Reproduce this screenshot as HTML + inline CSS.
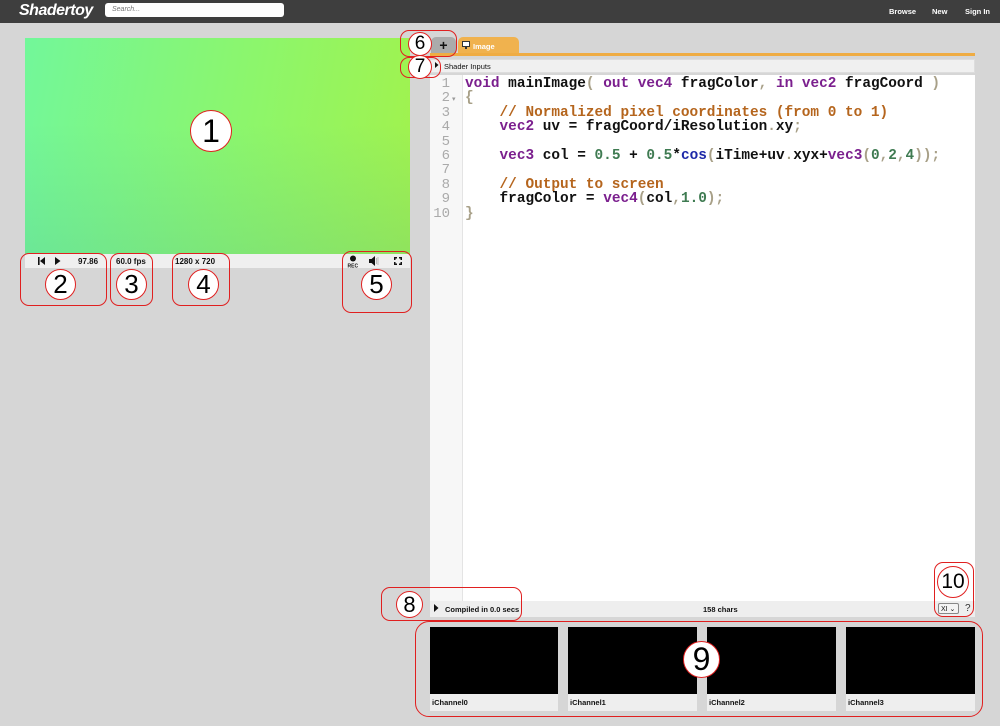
<!DOCTYPE html>
<html><head><meta charset="utf-8"><style>
*{margin:0;padding:0;box-sizing:border-box}
body{width:1000px;height:726px;overflow:hidden;background:#d6d6d6;font-family:"Liberation Sans",sans-serif;position:relative}
.abs{position:absolute}
#hdr{left:0;top:0;width:1000px;height:23px;background:#3e3e3e}
#logo{left:19px;top:2px;color:#fff;font:italic bold 16px "Liberation Sans",sans-serif;letter-spacing:-0.5px}
#search{left:105px;top:3px;width:179px;height:14px;background:#fff;border-radius:3px;font:italic 7px "Liberation Sans",sans-serif;color:#777;padding:3px 7px}
.nav{top:7px;color:#fff;font:bold 7.5px "Liberation Sans",sans-serif}
#canvas{left:25px;top:38px;width:385px;height:216px;background:linear-gradient(100deg,#72f79a 0%,#8cf66c 55%,#a2f24c 100%)}
#canvas:after{content:"";position:absolute;left:0;top:0;right:0;bottom:0;background:linear-gradient(180deg,rgba(0,0,0,0) 40%,rgba(60,160,170,0.18) 100%)}
#ctrl{left:25px;top:254px;width:385px;height:14px;background:#efefef;font:bold 8px "Liberation Sans",sans-serif;color:#111}
.ann{position:absolute;border:1.3px solid #e02020;border-radius:9px}
.circ{position:absolute;background:#fff;border:1.3px solid #e02020;border-radius:50%;display:flex;align-items:center;justify-content:center;font-family:"Liberation Sans",sans-serif;color:#000}
#code{left:430px;top:75px;width:545px;height:526px;background:#fff}
#gut{left:430px;top:75px;width:33px;height:526px;background:#f7f7f7;border-right:1px solid #e4e4e4}
pre{position:absolute;left:465px;top:77px;font:bold 14.4px/14.4px "Liberation Mono",monospace;color:#111}
.ln{position:absolute;left:430px;top:77px;width:20px;text-align:right;font:14px/14.4px "Liberation Mono",monospace;color:#aaa}
.k{color:#7b1f8e}.c{color:#b5651d}.n{color:#3f7b52}.p{color:#a8a088}.f{color:#1d28a8}
.ch{position:absolute;top:627px;height:84px;background:#eee}
.ch div{background:#000;height:67px}
.ch span{display:block;font:bold 7.5px "Liberation Sans",sans-serif;padding:4px 2px;color:#111}
</style></head><body>
<div id="hdr" class="abs"></div>
<div id="logo" class="abs">Shadertoy</div>
<div id="search" class="abs">Search...</div>
<div class="abs nav" style="left:889px">Browse</div>
<div class="abs nav" style="left:932px">New</div>
<div class="abs nav" style="left:965px">Sign In</div>

<div id="canvas" class="abs"></div>
<div id="ctrl" class="abs">
 <svg class="abs" style="left:13px;top:3px" width="8" height="8"><rect x="0" y="0" width="1.6" height="8" fill="#111"/><path d="M7 0V8L2 4Z" fill="#111"/></svg>
 <svg class="abs" style="left:30px;top:3px" width="6" height="8"><path d="M0 0V8L5.5 4Z" fill="#111"/></svg>
 <span class="abs" style="left:53px;top:3px">97.86</span>
 <span class="abs" style="left:91px;top:3px">60.0 fps</span>
 <span class="abs" style="left:150px;top:3px">1280 x 720</span>
 <svg class="abs" style="left:322px;top:1px" width="12" height="13"><circle cx="6" cy="3.5" r="3" fill="#111"/><text x="0.5" y="12.5" font-size="5" font-weight="bold" font-family="Liberation Sans" fill="#111">REC</text></svg>
 <svg class="abs" style="left:344px;top:2px" width="10" height="10"><path d="M0 3H2.5L6 0V10L2.5 7H0Z" fill="#111"/><path d="M7.5 2V8M9 1V9" stroke="#999" stroke-width="0.6"/></svg>
 <svg class="abs" style="left:369px;top:3px" width="8" height="8"><path d="M0 0H3V1.5H1.5V3H0ZM8 0H5V1.5H6.5V3H8ZM0 8H3V6.5H1.5V5H0ZM8 8H5V6.5H6.5V5H8Z" fill="#111"/></svg>
</div>

<div class="abs" style="left:431px;top:37px;width:25px;height:17px;background:#ababab;border-radius:5px 5px 0 0;text-align:center;font:bold 14px 'Liberation Sans';line-height:17px;color:#111">+</div>
<div class="abs" style="left:458px;top:37px;width:61px;height:17px;background:#f0b24e;border-radius:5px 5px 0 0;font:bold 7.5px 'Liberation Sans';color:#fff;padding:5px 0 0 15px">Image</div>
<svg class="abs" style="left:462px;top:41px" width="8" height="8"><rect x="0.5" y="0.5" width="7" height="5" fill="#fff" stroke="#333"/><rect x="3" y="6" width="2" height="2" fill="#333"/></svg>
<div class="abs" style="left:430px;top:53px;width:545px;height:3px;background:#efac43"></div>
<div class="abs" style="left:430px;top:59px;width:545px;height:14px;background:#f0f0f0;border:1px solid #ddd;font:7.5px 'Liberation Sans';color:#111;padding:2px 0 0 13px">Shader Inputs</div>
<svg class="abs" style="left:435px;top:62px" width="4" height="7"><path d="M0 0V6L3.5 3Z" fill="#111"/></svg>

<div id="code" class="abs"></div>
<div id="gut" class="abs"></div>
<div class="ln">1<br>2<br>3<br>4<br>5<br>6<br>7<br>8<br>9<br>10</div>
<span class="abs" style="left:452px;top:95px;font-size:7px;color:#999">▾</span>
<pre><span class="k">void</span> mainImage<span class="p">(</span> <span class="k">out</span> <span class="k">vec4</span> fragColor<span class="p">,</span> <span class="k">in</span> <span class="k">vec2</span> fragCoord <span class="p">)</span>
<span class="p">{</span>
    <span class="c">// Normalized pixel coordinates (from 0 to 1)</span>
    <span class="k">vec2</span> uv = fragCoord/iResolution<span class="p">.</span>xy<span class="p">;</span>

    <span class="k">vec3</span> col = <span class="n">0.5</span> + <span class="n">0.5</span>*<span class="f">cos</span><span class="p">(</span>iTime+uv<span class="p">.</span>xyx+<span class="k">vec3</span><span class="p">(</span><span class="n">0</span><span class="p">,</span><span class="n">2</span><span class="p">,</span><span class="n">4</span><span class="p">));</span>

    <span class="c">// Output to screen</span>
    fragColor = <span class="k">vec4</span><span class="p">(</span>col<span class="p">,</span><span class="n">1.0</span><span class="p">);</span>
<span class="p">}</span></pre>

<div class="abs" style="left:430px;top:601px;width:545px;height:16px;background:#eee;font:bold 7.5px 'Liberation Sans';color:#111">
 <svg class="abs" style="left:4px;top:3px" width="5" height="9"><path d="M0 0V8L4.5 4Z" fill="#111"/></svg>
 <span class="abs" style="left:15px;top:4px">Compiled in 0.0 secs</span>
 <span class="abs" style="left:273px;top:4px">158 chars</span>
 <div class="abs" style="left:508px;top:2px;width:21px;height:11px;border:1px solid #888;border-radius:2px;background:#f4f4f4;font:normal 7px 'Liberation Sans';padding:1px 2px">XI ⌄</div>
 <span class="abs" style="left:535px;top:2px;font:normal 10px 'Liberation Sans';color:#333">?</span>
</div>

<div class="ch" style="left:430px;width:128px"><div></div><span>iChannel0</span></div>
<div class="ch" style="left:568px;width:129px"><div></div><span>iChannel1</span></div>
<div class="ch" style="left:707px;width:129px"><div></div><span>iChannel2</span></div>
<div class="ch" style="left:846px;width:129px"><div></div><span>iChannel3</span></div>

<div class="ann" style="left:20px;top:253px;width:87px;height:53px"></div>
<div class="ann" style="left:110px;top:253px;width:43px;height:53px"></div>
<div class="ann" style="left:172px;top:253px;width:58px;height:53px"></div>
<div class="ann" style="left:342px;top:251px;width:70px;height:62px"></div>
<div class="ann" style="left:400px;top:30px;width:57px;height:27px"></div>
<div class="ann" style="left:400px;top:57px;width:41px;height:21px"></div>
<div class="ann" style="left:381px;top:587px;width:141px;height:34px"></div>
<div class="ann" style="left:415px;top:621px;width:568px;height:96px;border-radius:14px"></div>
<div class="ann" style="left:934px;top:562px;width:40px;height:55px"></div>

<div class="circ" style="left:190px;top:110px;width:42px;height:42px;font-size:32px">1</div>
<div class="circ" style="left:45px;top:269px;width:31px;height:31px;font-size:26px">2</div>
<div class="circ" style="left:116px;top:269px;width:31px;height:31px;font-size:26px">3</div>
<div class="circ" style="left:188px;top:269px;width:31px;height:31px;font-size:26px">4</div>
<div class="circ" style="left:361px;top:269px;width:31px;height:31px;font-size:26px">5</div>
<div class="circ" style="left:408px;top:32px;width:24px;height:24px;font-size:19px">6</div>
<div class="circ" style="left:408px;top:55px;width:24px;height:24px;font-size:19px">7</div>
<div class="circ" style="left:396px;top:591px;width:27px;height:27px;font-size:22px">8</div>
<div class="circ" style="left:683px;top:641px;width:37px;height:37px;font-size:32px">9</div>
<div class="circ" style="left:937px;top:566px;width:32px;height:32px;font-size:21px">10</div>
</body></html>
